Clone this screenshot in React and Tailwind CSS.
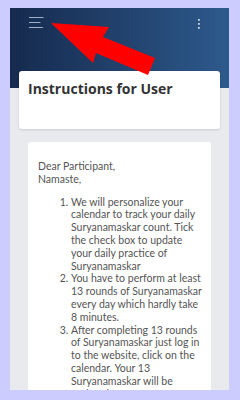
export default function App() {
  return (
    <div className="w-[240px] h-[400px] bg-[#ccccfe] pt-[8px] pl-[10px] overflow-hidden relative" style={{ fontFamily: "'Open Sans', sans-serif" }}>
      <div className="w-[219px] h-[382px] overflow-hidden bg-[#e9eaee] flex flex-col">
        <header className="h-[80px] shrink-0 bg-gradient-to-r from-[#162a4e] to-[#2d5a8c] flex justify-between items-start px-[19px] pt-[9px]">
          <svg width="15" height="12" viewBox="0 0 15 12">
            <g stroke="#9fb0c8" strokeWidth="1.2" strokeLinecap="round">
              <line x1="0.5" y1="0.5" x2="14" y2="0.5" />
              <line x1="0.5" y1="5.5" x2="11" y2="5.5" />
              <line x1="0.5" y1="10.5" x2="13.5" y2="10.5" />
            </g>
          </svg>
          <svg width="4" height="12" viewBox="0 0 4 12" className="mt-[1px] mr-[9px]">
            <g fill="#c9d6e8">
              <rect x="1" y="1" width="1.8" height="1.8" />
              <rect x="1" y="5" width="1.8" height="1.8" />
              <rect x="1" y="9" width="1.8" height="1.8" />
            </g>
          </svg>
        </header>
        <div className="-mt-[17px] px-[9px]">
          <div className="bg-white rounded-[3px] shadow-sm h-[58px] px-[9px] pt-[8px]">
            <h1 className="text-[14px] font-bold text-[#333333] leading-[20px]">Instructions for User</h1>
          </div>
        </div>
        <div className="px-[18px] mt-[13px]">
          <div className="bg-white rounded-t-[3px] pt-[18px] pl-[10px] pr-[8px] pb-4 text-[10.5px] leading-[12.8px] text-[#555555]" style={{ fontFamily: "Lato, sans-serif" }}>
            <p>Dear Participant,</p>
            <p>Namaste,</p>
            <ol className="list-decimal pl-[33px] mt-[10px]">
              <li>We will personalize your calendar to track your daily Suryanamaskar count. Tick the check box to update your daily practice of Suryanamaskar</li>
              <li>You have to perform at least 13 rounds of Suryanamaskar every day which hardly take 8 minutes.</li>
              <li>After completing 13 rounds of Suryanamaskar just log in to the website, click on the calendar. Your 13 Suryanamaskar will be updated.</li>
            </ol>
          </div>
        </div>
      </div>
      <svg className="absolute left-0 top-0 pointer-events-none" width="240" height="400" viewBox="0 0 240 400">
        <polygon points="51,23 109,27 103,37 155,58 148,75 96,53 93,63" fill="#ff0000" />
      </svg>
    </div>
  );
}
